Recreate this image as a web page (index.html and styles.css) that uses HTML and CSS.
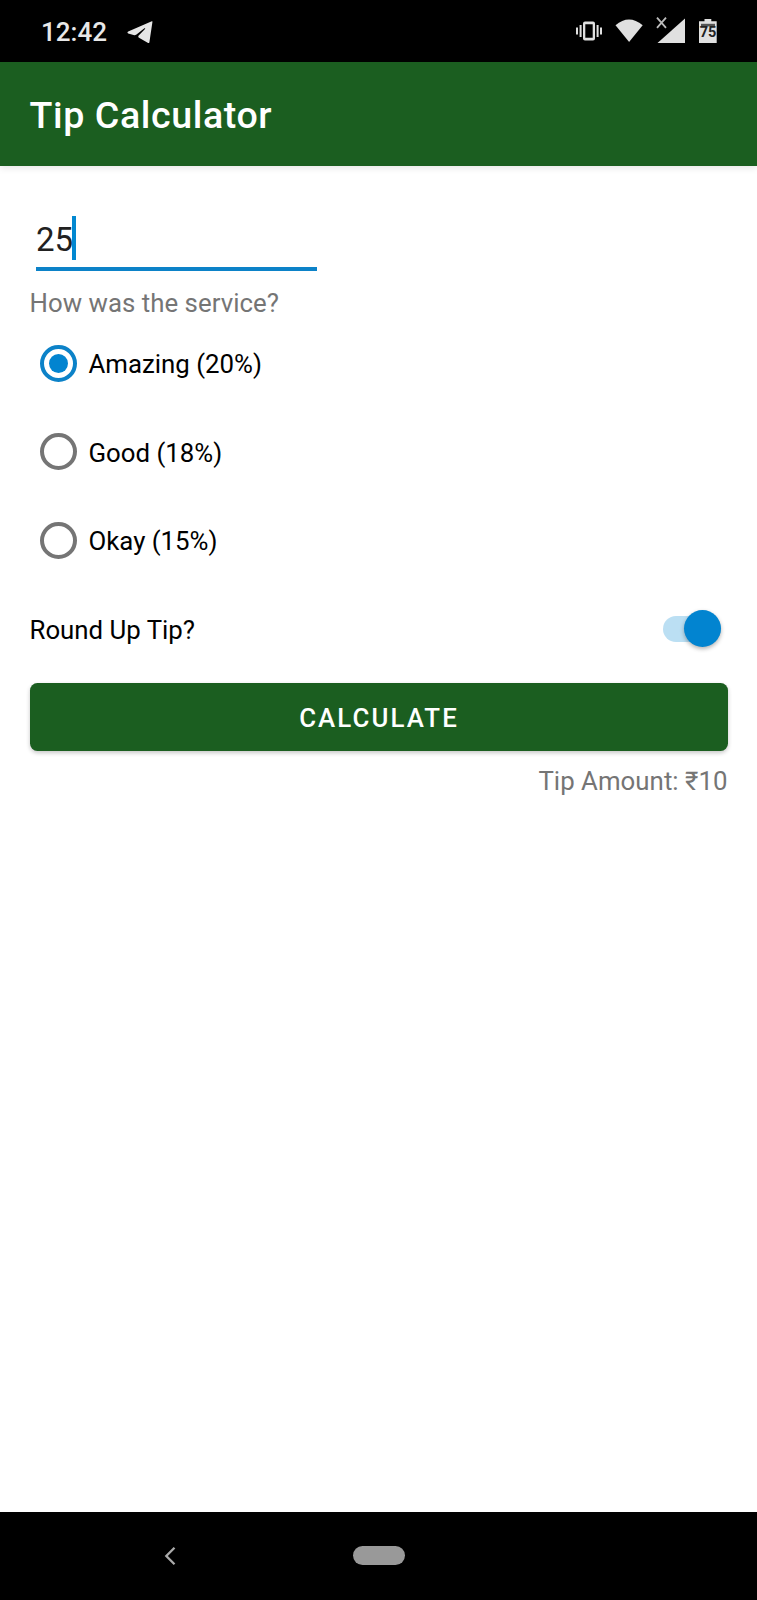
FILE: index.html
```html
<!DOCTYPE html>
<html lang="en">
<head>
<meta charset="utf-8">
<title>Tip Calculator</title>
<link rel="stylesheet" href="styles.css">
</head>
<body>
<div class="screen">
  <header class="status">
    <span class="clock">12:42</span>
    <svg class="telegram" width="26" height="23" viewBox="0 0 26 23"><path d="M25.500.6 22.400 21.200Q22 22.500 20.700 21.800L12 16.800Q10.700 15.700 11.700 14.500L18 8Q18.700 6.800 17.400 7.300L9.500 13.600Q8 14.500 6.500 14.100L1.200 12.400Q-.3 11.500 1.200 10.400L24.200.5Q25.200.1 25.500.6Z" fill="#e6e6e6"/></svg>
    <svg class="system" width="150" height="30" viewBox="570 14 150 30">
      <g fill="#e0e0e0">
        <path fill-rule="evenodd" d="M585 21.500h8q2 0 2 2v15q0 2-2 2h-8q-2 0-2-2v-15q0-2 2-2Zm.3 2.800v13.400h7.400V24.300Z"/>
        <path d="M579.600 25h2v12h-2ZM576 27.600h2v6.800h-2ZM596.600 25h2v12h-2ZM600 27.600h2v6.800h-2Z"/>
        <path d="M615.500 25.200Q628.900 13.600 642.700 25.200L629.100 42Z"/>
        <path d="M685 18.500V43H657.500Z"/>
        <path d="M704.500 19h6.800v2.200h5.400V43H699V21.200h5.500Z"/>
      </g>
      <path d="m657 17.600 9 10.200m0-10.200-9 10.200" fill="none" stroke="#bdbdbd" stroke-width="1.800"/>
      <path d="M701 23.800h14v2.600h-14Z" fill="#555"/>
      <text class="charge" x="708" y="37" text-anchor="middle">75</text>
    </svg>
  </header>
  <div class="appbar"><h1 class="title">Tip Calculator</h1></div>
  <main class="content">
    <div class="field"><span class="value">25</span><span class="caret"></span></div>
    <p class="question">How was the service?</p>
    <div class="option"><span class="radio checked"></span><span class="label">Amazing (20%)</span></div>
    <div class="option"><span class="radio"></span><span class="label">Good (18%)</span></div>
    <div class="option"><span class="radio"></span><span class="label">Okay (15%)</span></div>
    <div class="round"><span class="label">Round Up Tip?</span><span class="switch"><span class="thumb"></span></span></div>
    <button class="calculate">CALCULATE</button>
    <p class="result">Tip Amount: ₹10</p>
  </main>
  <nav class="nav">
    <svg class="back" width="12" height="20" viewBox="0 0 12 20"><path d="m10.500 1.700-8.200 8.300 8.200 8.300" fill="none" stroke="#aaa" stroke-width="2.300"/></svg>
    <span class="home"></span>
  </nav>
</div>
</body>
</html>
```
FILE: styles.css
```css
* { box-sizing: border-box; }
body { margin: 0; background: #fff; font-family: Roboto, sans-serif; }
.screen { width: 757px; height: 1600px; display: flex; flex-direction: column; overflow: hidden; }
.status { height: 62px; flex: none; background: #000; display: flex; padding: 0 37px 0 41px; }
.clock { width: 86px; padding-top: 1px; line-height: 62px; font-size: 26px; font-weight: 500; color: #e8e8e8; }
.telegram { margin-top: 21px; }
.system { margin: 14px 0 0 auto; }
.charge { font: 700 14.5px Roboto, sans-serif; fill: #222; }
.appbar { height: 103.5px; flex: none; background: #1b5e20; padding-left: 29.5px; box-shadow: 0 2px 7px rgba(0, 0, 0, .1); }
.title { margin: 0; padding-top: 2px; line-height: 103px; font-size: 37.6px; font-weight: 500; letter-spacing: .6px; color: #fff; }
.content { flex: 1; padding: 0 29.5px; font-size: 25.8px; color: #000; }
.field { width: 281px; height: 105.5px; margin: 0 0 15px 6.5px; padding-top: 50.5px; border-bottom: 4px solid #0c82c8; display: flex; align-items: flex-start; }
.value { margin-right: -1px; line-height: 48px; font-size: 33px; color: #212121; }
.caret { width: 4px; height: 44px; background: #0288d1; }
.question, .result { margin: 0; padding-top: 1px; line-height: 32px; letter-spacing: .03px; color: #757575; }
.option { height: 88.5px; padding-left: 10.5px; display: flex; align-items: center; gap: 11.5px; }
.label { padding-top: 2px; }
.radio { width: 37px; height: 37px; flex: none; border: 4px solid #757575; border-radius: 50%; }
.radio.checked { border-color: #0c82c8; padding: 5px; }
.radio.checked::after { content: ""; display: block; width: 19px; height: 19px; border-radius: 50%; background: #0284d0; }
.round { height: 88.5px; display: flex; align-items: center; justify-content: space-between; }
.switch { width: 58px; height: 26px; margin-right: 6.5px; border-radius: 13px; background: #bbdff3; display: flex; align-items: center; justify-content: flex-end; }
.thumb { width: 37px; height: 37px; flex: none; border-radius: 50%; background: #0284d0; box-shadow: 0 2px 4px rgba(0, 0, 0, .3); }
.calculate { display: block; width: 698px; height: 67.5px; margin: 10px 0 13px; padding: 2px 0 0 1px; border: 0; border-radius: 7.4px; background: #1b5e20; box-shadow: 0 2px 4px rgba(0, 0, 0, .22); font: 500 25.8px Roboto, sans-serif; letter-spacing: 2.1px; color: #fff; }
.result { text-align: right; }
.nav { height: 88.5px; flex: none; background: #000; display: flex; align-items: center; padding: 0 0 0 164px; }
.back { margin-right: 176.5px; }
.home { width: 52px; height: 19px; border-radius: 10px; background: #999; }
```
